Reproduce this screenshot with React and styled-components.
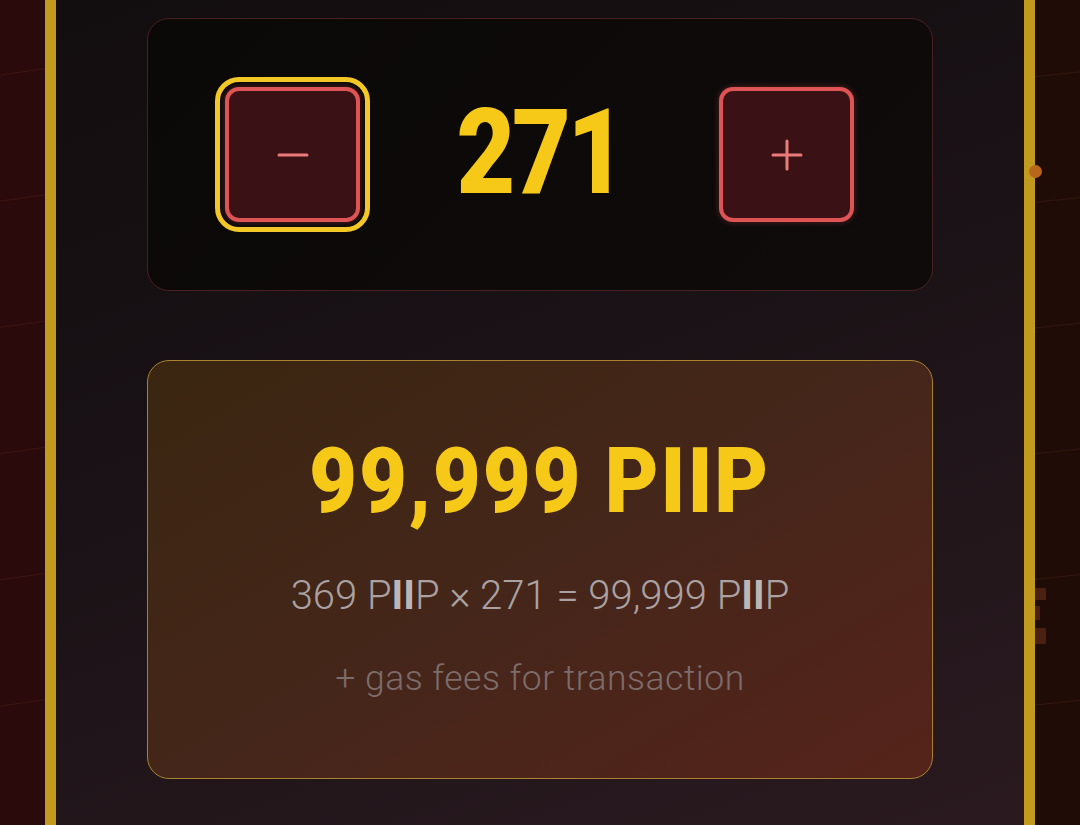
import React, { useState } from 'react';
import styled, { createGlobalStyle } from 'styled-components';

const GlobalStyle = createGlobalStyle`
  html, body {
    margin: 0;
    padding: 0;
    height: 100%;
    background: #1d0a08;
    overflow: hidden;
  }
  #root {
    height: 100%;
  }
`;

const PRICE = 369;

const formatNumber = (n) => n.toLocaleString('en-US');

const App = () => {
  const [quantity, setQuantity] = useState(271);
  const total = 99999;

  return (
    <>
      <GlobalStyle />
      <StyledPage>
        <StyledSide $side="left" />
        <StyledPanel>
          <StyledCounterCard>
            <StyledStepButton $focused onClick={() => setQuantity(Math.max(1, quantity - 1))}>
              <svg width="34" height="34" viewBox="0 0 34 34">
                <line x1="3" y1="17" x2="31" y2="17" stroke="#ec7a7a" strokeWidth="3" strokeLinecap="round" />
              </svg>
            </StyledStepButton>
            <StyledQuantity>{quantity}</StyledQuantity>
            <StyledStepButton onClick={() => setQuantity(quantity + 1)}>
              <svg width="34" height="34" viewBox="0 0 34 34">
                <line x1="3" y1="17" x2="31" y2="17" stroke="#ec7a7a" strokeWidth="3" strokeLinecap="round" />
                <line x1="17" y1="3" x2="17" y2="31" stroke="#ec7a7a" strokeWidth="3" strokeLinecap="round" />
              </svg>
            </StyledStepButton>
          </StyledCounterCard>

          <StyledPriceCard>
            <StyledTotal>{formatNumber(total)} PIIP</StyledTotal>
            <StyledBreakdown>
              {PRICE} P<StyledTicker>II</StyledTicker>P × {quantity} = {formatNumber(total)} P<StyledTicker>II</StyledTicker>P
            </StyledBreakdown>
            <StyledGasNote>+ gas fees for transaction</StyledGasNote>
          </StyledPriceCard>
        </StyledPanel>
        <StyledSide $side="right">
          <StyledDot />
          <StyledTick $top={588} $h={12} />
          <StyledTick $top={606} $h={14} $w={5} />
          <StyledTick $top={628} $h={16} />
        </StyledSide>
      </StyledPage>
    </>
  );
};

export default App;

// Styled components

const StyledPage = styled.div`
  display: flex;
  height: 100%;
  font-family: Roboto, 'Liberation Sans', sans-serif;
`;

const StyledSide = styled.div`
  position: relative;
  width: 45px;
  flex-shrink: 0;
  background-color: ${({ $side }) => ($side === 'left' ? '#2a0a0b' : '#1f0c06')};
  background-image: repeating-linear-gradient(
    ${({ $side }) => ($side === 'left' ? '-8deg' : '-6deg')},
    transparent 0px,
    transparent 123px,
    rgba(120, 60, 50, 0.2) 124px,
    transparent 125px
  );
`;

const StyledDot = styled.div`
  position: absolute;
  top: 165px;
  left: -6px;
  width: 13px;
  height: 13px;
  border-radius: 50%;
  background: #b8661c;
`;

const StyledTick = styled.div`
  position: absolute;
  top: ${({ $top }) => $top}px;
  left: 0;
  width: ${({ $w }) => $w || 11}px;
  height: ${({ $h }) => $h}px;
  background: #4a2012;
`;

const StyledPanel = styled.div`
  flex: 1;
  display: flex;
  flex-direction: column;
  align-items: center;
  gap: 69px;
  padding-top: 18px;
  border-left: 11px solid #c29a1e;
  border-right: 11px solid #c29a1e;
  background: linear-gradient(160deg, #120d0f 0%, #1a1216 45%, #2a1a20 100%);
`;

const StyledCounterCard = styled.div`
  width: 786px;
  height: 273px;
  box-sizing: border-box;
  display: flex;
  align-items: center;
  justify-content: space-between;
  padding: 0 78px 0 77px;
  border: 1px solid #4a1f22;
  border-radius: 22px;
  background: linear-gradient(135deg, #0b0808 0%, #0f0b0b 100%);
`;

const StyledStepButton = styled.button`
  width: 135px;
  height: 135px;
  display: flex;
  align-items: center;
  justify-content: center;
  box-sizing: border-box;
  padding: 0;
  background: #3a1215;
  border: 4px solid #de5353;
  border-radius: 14px;
  cursor: pointer;
  outline: ${({ $focused }) => ($focused ? '5px solid #f3c826' : 'none')};
  outline-offset: 5px;
  box-shadow: 0 0 6px rgba(222, 83, 83, 0.35);
`;

const StyledQuantity = styled.div`
  font-weight: 900;
  font-size: 118px;
  line-height: 1;
  letter-spacing: -4px;
  color: #f6c919;
  transform: scaleX(0.86);
  margin-top: -4px;
`;

const StyledPriceCard = styled.div`
  width: 786px;
  height: 419px;
  box-sizing: border-box;
  display: flex;
  flex-direction: column;
  align-items: center;
  padding-top: 76px;
  border: 1.5px solid #a8822e;
  border-radius: 22px;
  background: linear-gradient(150deg, #3a2610 0%, #45261a 50%, #55231a 100%);
`;

const StyledTotal = styled.div`
  font-weight: 900;
  font-size: 90px;
  line-height: 1;
  letter-spacing: 2px;
  color: #f6c919;
  transform: scaleX(0.92);
`;

const StyledBreakdown = styled.div`
  margin-top: 49px;
  font-weight: 300;
  font-size: 40px;
  line-height: 1;
  color: #aaa2a2;
`;

const StyledTicker = styled.span`
  font-weight: 700;
  color: #bdb6b6;
`;

const StyledGasNote = styled.div`
  margin-top: 45px;
  font-weight: 300;
  font-size: 35.5px;
  line-height: 1;
  letter-spacing: 0.5px;
  color: #7c6c6a;
`;
